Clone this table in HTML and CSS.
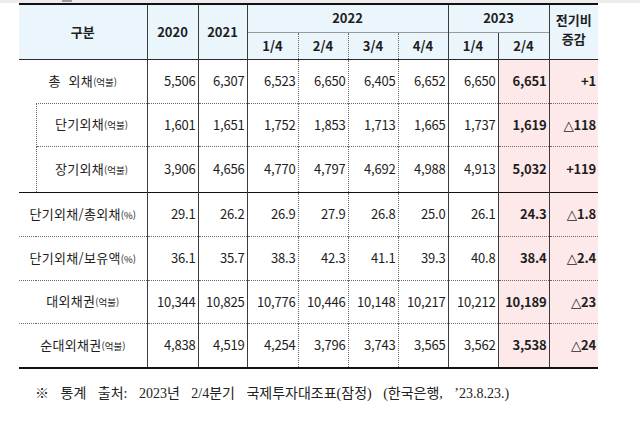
FILE: index.html
```html
<!DOCTYPE html>
<html lang="ko">
<head>
<meta charset="utf-8">
<link rel="stylesheet" href="styles.css">
</head>
<body>
<div class="topbar"><span class="mark"></span></div>
<table class="stats">
  <colgroup>
    <col class="w-ind"><col class="w-lab">
    <col class="w51"><col class="w49"><col class="w51"><col class="w50"><col class="w50"><col class="w50"><col class="w50"><col class="w51"><col class="w49">
  </colgroup>
  <thead>
    <tr class="h1">
      <th colspan="2" rowspan="2" class="first">구분</th>
      <th rowspan="2">2020</th>
      <th rowspan="2">2021</th>
      <th colspan="4" class="grp">2022</th>
      <th colspan="2" class="grp">2023</th>
      <th rowspan="2" class="chg"><span class="ln">전기비</span><span class="ln">증감</span></th>
    </tr>
    <tr class="h2">
      <th>1/4</th><th class="q">2/4</th><th class="q">3/4</th><th class="q">4/4</th>
      <th>1/4</th><th>2/4</th>
    </tr>
  </thead>
  <tbody>
    <tr class="r1 solidtop">
      <td colspan="2" class="first lab">총&nbsp; 외채<span class="u">(억불)</span></td>
      <td>5,506</td><td>6,307</td><td>6,523</td><td class="q">6,650</td><td class="q">6,405</td><td class="q">6,652</td><td>6,650</td><td class="hl b">6,651</td><td class="hl b">+1</td>
    </tr>
    <tr class="r2 dottop">
      <td rowspan="2" class="first ind"></td>
      <td class="lab sub">단기외채<span class="u">(억불)</span></td>
      <td>1,601</td><td>1,651</td><td>1,752</td><td class="q">1,853</td><td class="q">1,713</td><td class="q">1,665</td><td>1,737</td><td class="hl b">1,619</td><td class="hl b"><span class="tri">△</span>118</td>
    </tr>
    <tr class="r3 dottop">
      <td class="lab sub">장기외채<span class="u">(억불)</span></td>
      <td>3,906</td><td>4,656</td><td>4,770</td><td class="q">4,797</td><td class="q">4,692</td><td class="q">4,988</td><td>4,913</td><td class="hl b">5,032</td><td class="hl b">+119</td>
    </tr>
    <tr class="r4 blacktop">
      <td colspan="2" class="first lab">단기외채/총외채<span class="u">(%)</span></td>
      <td>29.1</td><td>26.2</td><td>26.9</td><td class="q">27.9</td><td class="q">26.8</td><td class="q">25.0</td><td>26.1</td><td class="hl b">24.3</td><td class="hl b"><span class="tri">△</span>1.8</td>
    </tr>
    <tr class="r5 dottop">
      <td colspan="2" class="first lab">단기외채/보유액<span class="u">(%)</span></td>
      <td>36.1</td><td>35.7</td><td>38.3</td><td class="q">42.3</td><td class="q">41.1</td><td class="q">39.3</td><td>40.8</td><td class="hl b">38.4</td><td class="hl b"><span class="tri">△</span>2.4</td>
    </tr>
    <tr class="r6 dottop">
      <td colspan="2" class="first lab">대외채권<span class="u">(억불)</span></td>
      <td>10,344</td><td>10,825</td><td>10,776</td><td class="q">10,446</td><td class="q">10,148</td><td class="q">10,217</td><td>10,212</td><td class="hl b">10,189</td><td class="hl b"><span class="tri">△</span>23</td>
    </tr>
    <tr class="r7 dottop">
      <td colspan="2" class="first lab">순대외채권<span class="u">(억불)</span></td>
      <td>4,838</td><td>4,519</td><td>4,254</td><td class="q">3,796</td><td class="q">3,743</td><td class="q">3,565</td><td>3,562</td><td class="hl b">3,538</td><td class="hl b"><span class="tri">△</span>24</td>
    </tr>
  </tbody>
</table>
<p class="note">※ 통계 출처: 2023년 2/4분기 국제투자대조표(잠정) (한국은행, ’23.8.23.)</p>
</body>
</html>
```

FILE: styles.css
```css
html, body {
  margin: 0;
  padding: 0;
  background: #ffffff;
}
body {
  font-family: "Noto Sans CJK KR", "Noto Sans", sans-serif;
  color: #1e1e1e;
}
.topbar {
  height: 3px;
  background: #ececec;
  position: relative;
}
.topbar .mark {
  position: absolute;
  left: 62px;
  top: 0;
  width: 10px;
  height: 2px;
  background: #9a9a9a;
}
.stats {
  margin-left: 19px;
  width: 579px;
  table-layout: fixed;
  border-collapse: collapse;
  border-top: 2px solid #111;
  border-bottom: 2px solid #111;
  font-size: 13px;
  line-height: 16px;
}
.w-ind { width: 17px; }
.w-lab { width: 111px; }
.w51 { width: 51px; }
.w50 { width: 50px; }
.w49 { width: 49px; }

.stats th, .stats td {
  padding: 0;
  border-left: 1px solid #3c3c3c;
  white-space: nowrap;
}
.stats .first { border-left: none; }
.stats .q { border-left: 1px dotted #6a6a6a; }

.stats th {
  background: #eaf5fc;
  font-weight: 700;
  text-align: center;
  vertical-align: middle;
  font-size: 13px;
}
.stats .h1 { height: 28px; }
.stats .h2 { height: 27px; }
.stats .h2 th { border-top: 1px solid #9a9a9a; padding-top: 1px; }
.stats .chg { padding-bottom: 6px; }
.stats .chg .ln {
  display: block;
  height: 19px;
  line-height: 19px;
}

.stats td {
  text-align: right;
  padding-right: 2px;
  vertical-align: middle;
  letter-spacing: -0.2px;
}
.stats .r1 { height: 44px; }
.stats .r2 { height: 43px; }
.stats .r3 { height: 46px; }
.stats .r4 { height: 44px; }
.stats .r5 { height: 44px; }
.stats .r6 { height: 43px; }
.stats .r7 { height: 45px; }

.solidtop td { border-top: 1px solid #2a2a2a; }
.dottop td { border-top: 1px dotted #6a6a6a; }
.blacktop td { border-top: 1px solid #111; }
.stats td.ind { border-top: none; }

.stats td.lab {
  text-align: center;
  padding-right: 0;
  letter-spacing: 0.3px;
}
.stats td.sub { border-left: 1px dotted #6a6a6a; }
.u {
  font-size: 9.5px;
  letter-spacing: 0;
}
.tri {
  font-family: "DejaVu Sans", sans-serif;
  font-weight: 400;
  font-size: 13.5px;
}
.stats td.hl { background: #fde9e9; }
.stats td.b { font-weight: 700; }

.note {
  margin: 16px 0 0 35px;
  font-family: "Liberation Serif", "Noto Sans CJK KR", serif;
  font-size: 14px;
  line-height: 18px;
  color: #222;
  word-spacing: 8px;
}
```
